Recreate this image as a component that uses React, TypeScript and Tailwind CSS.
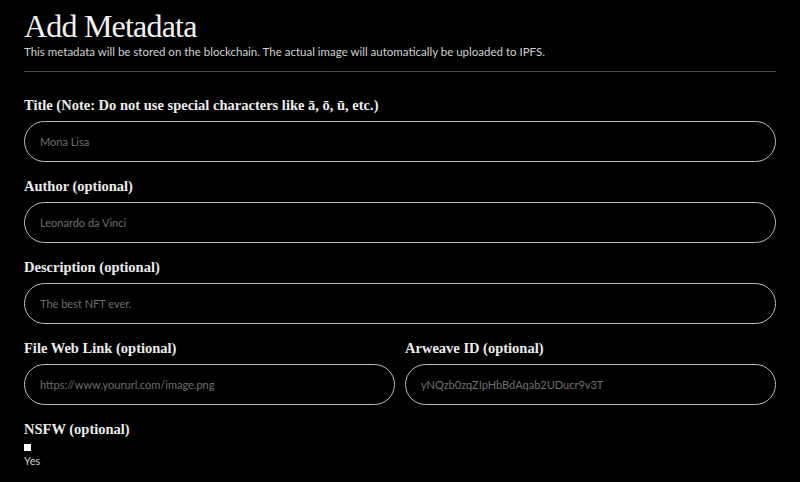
export default function App() {
  return (
    <div className="min-h-screen bg-black text-white px-6 pt-[6px] font-['Lato','Liberation_Sans',sans-serif]">
      {/* Header */}
      <h1 className="font-['Liberation_Serif',serif] text-[32px] leading-[40px] tracking-tight font-normal text-[#f2f2f2]">
        Add Metadata
      </h1>
      <p className="text-[11.5px] leading-[14px] text-[#d0d0d0] -mt-[1px]">
        This metadata will be stored on the blockchain. The actual image will automatically be uploaded to IPFS.
      </p>
      <div className="h-px bg-[#4a4a4a] mt-[12px] mb-[24px]" />

      <div className="flex flex-col gap-[15px]">
        <Field label="Title (Note: Do not use special characters like ā, ō, ū, etc.)" placeholder="Mona Lisa" />
        <Field label="Author (optional)" placeholder="Leonardo da Vinci" />
        <Field label="Description (optional)" placeholder="The best NFT ever." />
        <div className="grid grid-cols-2 gap-[10px]">
          <Field label="File Web Link (optional)" placeholder="https://www.yoururl.com/image.png" />
          <Field label="Arweave ID (optional)" placeholder="yNQzb0zqZIpHbBdAqab2UDucr9v3T" />
        </div>
        <div>
          <Label text="NSFW (optional)" />
          <div className="mt-[6px] w-[7px] h-[7px] bg-white" />
          <div className="text-[11px] leading-[14px] text-[#cfcfcf] mt-[3px]">Yes</div>
        </div>
      </div>
    </div>
  );
}

function Label({ text }: { text: string }) {
  return (
    <div className="font-['Liberation_Serif',serif] font-bold text-[14.5px] leading-[18px] text-[#ececec]">
      {text}
    </div>
  );
}

function Field({ label, placeholder }: { label: string; placeholder: string }) {
  return (
    <div>
      <Label text={label} />
      <input
        placeholder={placeholder}
        className="mt-[7px] w-full h-[41px] rounded-full border border-[#bdbdbd] bg-black px-[15px] text-[11px] text-white placeholder:text-[#6f6f6f] outline-none"
      />
    </div>
  );
}
